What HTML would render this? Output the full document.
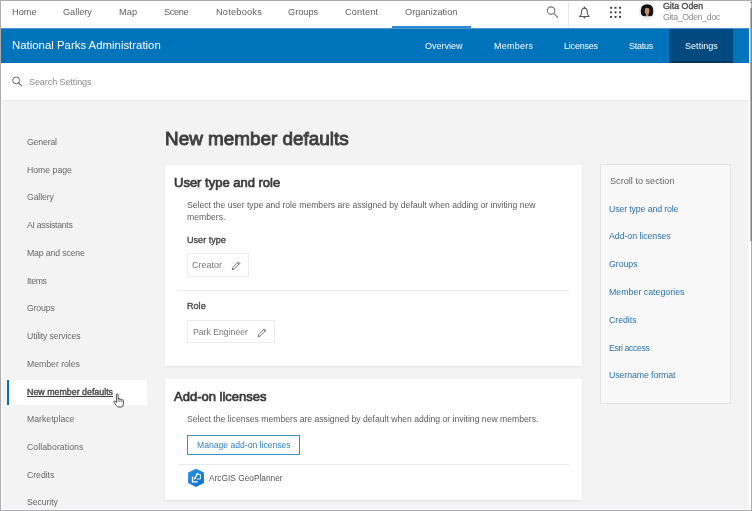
<!DOCTYPE html>
<html><head><meta charset="utf-8"><style>
html,body{margin:0;padding:0;width:752px;height:511px;overflow:hidden;background:#f3f3f3}
body{position:relative;font-family:"Liberation Sans",sans-serif}
.t{position:absolute;white-space:nowrap;line-height:1;will-change:transform}
.r{position:absolute}
</style></head><body>
<div class="r" style="left:0px;top:0px;width:752px;height:28px;background:#fff"></div>
<div class="r" style="left:0px;top:63px;width:752px;height:37px;background:#fff"></div>
<div class="r" style="left:1px;top:28px;width:748px;height:35px;background:#0074ba"></div>
<div class="r" style="left:669px;top:28px;width:64px;height:35px;background:#004a7f"></div>
<div class="r" style="left:669px;top:61px;width:64px;height:2px;background:#00325a"></div>
<div class="t" style="left:11.7px;top:8px;font-size:9.2px;color:#606060;letter-spacing:0.045px;">Home</div>
<div class="t" style="left:63.3px;top:8px;font-size:9.2px;color:#606060;letter-spacing:-0.027px;">Gallery</div>
<div class="t" style="left:118.9px;top:8px;font-size:9.2px;color:#606060;letter-spacing:0.180px;">Map</div>
<div class="t" style="left:164.0px;top:8px;font-size:9.2px;color:#606060;letter-spacing:-0.332px;">Scene</div>
<div class="t" style="left:215.6px;top:8px;font-size:9.2px;color:#606060;letter-spacing:0.228px;">Notebooks</div>
<div class="t" style="left:288.2px;top:8px;font-size:9.2px;color:#606060;letter-spacing:0.005px;">Groups</div>
<div class="t" style="left:345.2px;top:8px;font-size:9.2px;color:#606060;letter-spacing:0.150px;">Content</div>
<div class="t" style="left:405.1px;top:8px;font-size:9.2px;color:#606060;letter-spacing:0.031px;">Organization</div>
<div class="r" style="left:392px;top:26px;width:79px;height:2px;background:#2d8ad0"></div>
<div class="r" style="left:1px;top:28px;width:748px;height:1px;background:#4a95cf"></div>
<div class="r" style="left:568px;top:2px;width:1px;height:25px;background:#e6e6e6"></div>
<div class="t" style="left:12.4px;top:40px;font-size:11.4px;color:#fff;">National Parks Administration</div>
<div class="t" style="left:424.8px;top:42px;font-size:9.0px;color:#fff;letter-spacing:0.011px;">Overview</div>
<div class="t" style="left:493.6px;top:42px;font-size:9.0px;color:#fff;letter-spacing:0.228px;">Members</div>
<div class="t" style="left:563.9px;top:42px;font-size:9.0px;color:#fff;letter-spacing:-0.207px;">Licenses</div>
<div class="t" style="left:629.4px;top:42px;font-size:9.0px;color:#fff;letter-spacing:-0.234px;">Status</div>
<div class="t" style="left:685.1px;top:42px;font-size:9.0px;color:#fff;letter-spacing:0.044px;">Settings</div>
<div class="t" style="left:662.9px;top:2px;font-size:8.8px;color:#505050;-webkit-text-stroke:0.4px #505050;">Gita Oden</div>
<div class="t" style="left:663px;top:13px;font-size:8.7px;color:#8a8a8a;letter-spacing:-0.3px">Gita_Oden_doc</div>
<div class="t" style="left:28.6px;top:78px;font-size:9.0px;color:#8a8a8a;letter-spacing:-0.074px;">Search Settings</div>
<div class="r" style="left:7px;top:380px;width:140px;height:25px;background:#fff"></div>
<div class="r" style="left:7px;top:380px;width:2px;height:25px;background:#0074ba"></div>
<div class="t" style="left:27.0px;top:138px;font-size:8.7px;color:#676767;letter-spacing:-0.145px;">General</div>
<div class="t" style="left:27.0px;top:166px;font-size:8.7px;color:#676767;letter-spacing:0.003px;">Home page</div>
<div class="t" style="left:27.0px;top:193px;font-size:8.7px;color:#676767;letter-spacing:-0.130px;">Gallery</div>
<div class="t" style="left:27.0px;top:221px;font-size:8.7px;color:#676767;letter-spacing:-0.294px;">AI assistants</div>
<div class="t" style="left:27.0px;top:249px;font-size:8.7px;color:#676767;letter-spacing:-0.126px;">Map and scene</div>
<div class="t" style="left:27.0px;top:277px;font-size:8.7px;color:#676767;letter-spacing:-0.332px;">Items</div>
<div class="t" style="left:27.0px;top:304px;font-size:8.7px;color:#676767;letter-spacing:-0.147px;">Groups</div>
<div class="t" style="left:27.0px;top:332px;font-size:8.7px;color:#676767;letter-spacing:-0.133px;">Utility services</div>
<div class="t" style="left:27.0px;top:360px;font-size:8.7px;color:#676767;letter-spacing:-0.014px;">Member roles</div>
<div class="t" style="left:26.6px;top:388px;font-size:8.86px;color:#444;-webkit-text-stroke:0.35px #444;text-decoration:underline;text-underline-offset:0.5px">New member defaults</div>
<div class="t" style="left:27.0px;top:415px;font-size:8.7px;color:#676767;letter-spacing:0.009px;">Marketplace</div>
<div class="t" style="left:27.0px;top:443px;font-size:8.7px;color:#676767;letter-spacing:0.062px;">Collaborations</div>
<div class="t" style="left:27.0px;top:471px;font-size:8.7px;color:#676767;letter-spacing:-0.030px;">Credits</div>
<div class="t" style="left:27.0px;top:498px;font-size:8.7px;color:#676767;letter-spacing:-0.072px;">Security</div>
<div class="t" style="left:165.4px;top:130px;font-size:18.9px;color:#3f3f3f;-webkit-text-stroke:0.9px #3f3f3f;">New member defaults</div>
<div class="r" style="left:165px;top:165px;width:417px;height:201px;background:#fff;box-shadow:0 1px 2px rgba(0,0,0,0.08)"></div>
<div class="t" style="left:174.1px;top:176px;font-size:13px;color:#3b3b3b;-webkit-text-stroke:0.7px #3b3b3b;">User type and role</div>
<div class="t" style="left:187.1px;top:201px;font-size:8.64px;color:#5c5c5c;">Select the user type and role members are assigned by default when adding or inviting new</div>
<div class="t" style="left:187.1px;top:213px;font-size:8.64px;color:#5c5c5c;">members.</div>
<div class="t" style="left:187px;top:236px;font-size:9.1px;color:#474747;-webkit-text-stroke:0.35px #474747;">User type</div>
<div class="r" style="left:187px;top:253px;width:62px;height:24px;border:1px solid #ececec;box-sizing:border-box"></div>
<div class="t" style="left:192.1px;top:261px;font-size:8.98px;color:#777;">Creator</div>
<div class="r" style="left:178px;top:290px;width:391px;height:1px;background:#ebebeb"></div>
<div class="t" style="left:187px;top:302px;font-size:9.1px;color:#474747;-webkit-text-stroke:0.35px #474747;">Role</div>
<div class="r" style="left:187px;top:320px;width:88px;height:23px;border:1px solid #ececec;box-sizing:border-box"></div>
<div class="t" style="left:192.7px;top:328px;font-size:8.69px;color:#777;">Park Engineer</div>
<svg class="r" style="left:230px;top:259px" width="12" height="12" viewBox="0 0 12 12"><path d="M2.2 10.6 L2.8 8.5 L8.4 2.9 L9.9 4.4 L4.3 10 Z M7.6 3.7 L9.1 5.2" fill="none" stroke="#555" stroke-width="0.8" stroke-linejoin="round"/><path d="M2.2 10.6 L2.5 9.4 L3.4 10.3Z" fill="#555"/></svg>
<svg class="r" style="left:256px;top:325.5px" width="12" height="12" viewBox="0 0 12 12"><path d="M2.2 10.6 L2.8 8.5 L8.4 2.9 L9.9 4.4 L4.3 10 Z M7.6 3.7 L9.1 5.2" fill="none" stroke="#555" stroke-width="0.8" stroke-linejoin="round"/><path d="M2.2 10.6 L2.5 9.4 L3.4 10.3Z" fill="#555"/></svg>
<div class="r" style="left:165px;top:379px;width:417px;height:121px;background:#fff;box-shadow:0 1px 2px rgba(0,0,0,0.08)"></div>
<div class="t" style="left:173.8px;top:390px;font-size:13px;color:#3b3b3b;-webkit-text-stroke:0.7px #3b3b3b;">Add-on licenses</div>
<div class="t" style="left:187.1px;top:415px;font-size:8.64px;color:#5c5c5c;">Select the licenses members are assigned by default when adding or inviting new members.</div>
<div class="r" style="left:187px;top:435px;width:113px;height:20px;border:1px solid #3a8dcb;box-sizing:border-box"></div>
<div class="t" style="left:196.6px;top:441px;font-size:8.6px;color:#2f7fbf;">Manage add-on licenses</div>
<div class="r" style="left:178px;top:464px;width:391px;height:1px;background:#ebebeb"></div>
<div class="t" style="left:209.2px;top:474px;font-size:8.34px;color:#555;">ArcGIS GeoPlanner</div>
<svg class="r" style="left:186px;top:466px" width="20" height="24" viewBox="186 466 20 24"><defs><linearGradient id="gp" x1="0" y1="0" x2="1" y2="1"><stop offset="0" stop-color="#2a95e8"/><stop offset="1" stop-color="#0b6cc4"/></linearGradient></defs><path d="M196 468.8 L203.9 472.6 V483.1 L196 486.9 L188.1 483.1 V472.6Z" fill="url(#gp)"/><path d="M192.5 476.6 V481.9 H197.7" fill="none" stroke="#fff" stroke-width="1.3"/><path d="M197.6 474.3 H200.4 V479 H196.8" fill="none" stroke="#fff" stroke-width="0.9"/><path d="M194.6 478.7 L197.6 473.3" stroke="#fff" stroke-width="1.5" stroke-linecap="round"/><path d="M194.2 479.6 L194.9 478.2 L195.8 478.8Z" fill="#fff"/></svg>
<div class="r" style="left:600px;top:164px;width:131px;height:240px;background:#f8f8f8;border:1px solid #e2e2e2;box-sizing:border-box"></div>
<div class="t" style="left:610.4px;top:177px;font-size:9.1px;color:#666;letter-spacing:0.016px;">Scroll to section</div>
<div class="t" style="left:609.3px;top:205px;font-size:8.8px;color:#2b72aa;letter-spacing:-0.141px;">User type and role</div>
<div class="t" style="left:609.3px;top:232px;font-size:8.8px;color:#2b72aa;letter-spacing:-0.062px;">Add-on licenses</div>
<div class="t" style="left:609.3px;top:260px;font-size:8.8px;color:#2b72aa;letter-spacing:-0.053px;">Groups</div>
<div class="t" style="left:609.3px;top:288px;font-size:8.8px;color:#2b72aa;letter-spacing:0.011px;">Member categories</div>
<div class="t" style="left:609.3px;top:316px;font-size:8.8px;color:#2b72aa;letter-spacing:-0.049px;">Credits</div>
<div class="t" style="left:609.3px;top:344px;font-size:8.8px;color:#2b72aa;letter-spacing:-0.407px;">Esri access</div>
<div class="t" style="left:609.3px;top:371px;font-size:8.8px;color:#2b72aa;letter-spacing:-0.109px;">Username format</div>
<svg class="r" style="left:540px;top:0px" width="30" height="28" viewBox="540 0 30 28"><circle cx="551.05" cy="10.6" r="3.75" fill="none" stroke="#707070" stroke-width="1.05"/><line x1="553.8" y1="13.4" x2="557.7" y2="17.4" stroke="#707070" stroke-width="1.1" stroke-linecap="round"/></svg>
<svg class="r" style="left:570px;top:0px" width="30" height="28" viewBox="570 0 30 28"><path d="M579.6 16.4 Q581.6 15.2 581.6 12.6 V11.2 Q581.6 8.3 584.4 8.3 Q587.2 8.3 587.2 11.2 V12.6 Q587.2 15.2 589.2 16.4 Z" fill="none" stroke="#555" stroke-width="1.05" stroke-linejoin="round"/><path d="M583.3 8.6 Q583.6 6.4 584.4 6.2 Q585.2 6.4 585.5 8.6Z" fill="#555"/><path d="M583.3 16.9 H585.5 Q585.2 18.6 584.4 18.7 Q583.6 18.6 583.3 16.9Z" fill="#666"/></svg>
<svg class="r" style="left:604px;top:0px" width="24" height="28" viewBox="604 0 24 28"><rect x="610.15" y="6.85" width="1.9" height="1.9" fill="#3a3a3a"/><rect x="610.15" y="11.35" width="1.9" height="1.9" fill="#3a3a3a"/><rect x="610.15" y="15.95" width="1.9" height="1.9" fill="#3a3a3a"/><rect x="614.60" y="6.85" width="1.9" height="1.9" fill="#3a3a3a"/><rect x="614.60" y="11.35" width="1.9" height="1.9" fill="#3a3a3a"/><rect x="614.60" y="15.95" width="1.9" height="1.9" fill="#3a3a3a"/><rect x="619.08" y="6.85" width="1.9" height="1.9" fill="#3a3a3a"/><rect x="619.08" y="11.35" width="1.9" height="1.9" fill="#3a3a3a"/><rect x="619.08" y="15.95" width="1.9" height="1.9" fill="#3a3a3a"/></svg>
<svg class="r" style="left:634px;top:0px" width="26" height="26" viewBox="634 0 26 26"><defs><clipPath id="av"><circle cx="647.2" cy="12" r="7.7"/></clipPath></defs><circle cx="647.2" cy="12" r="8.5" fill="#ededf1"/><circle cx="647.2" cy="12" r="7.7" fill="#f6f6f8"/><g clip-path="url(#av)"><path d="M641 9.5 Q641.2 4.6 646 3.9 Q651.8 3.6 653 8.6 Q653.6 12.2 652.6 15 Q651.4 16.8 649.4 16.2 L645 16.2 Q642.4 16.8 641.3 14.6 Q640.4 12.2 641 9.5Z" fill="#121212"/><ellipse cx="647.1" cy="11" rx="2.3" ry="3.3" fill="#c38d6e"/><path d="M645.9 13.4 H648.4 V16.6 H645.9Z" fill="#b98266"/><path d="M642.5 18 Q644.5 16.2 647.2 16.4 Q650 16.2 652 18 V22 H642.5Z" fill="#f0f0f0"/></g></svg>
<svg class="r" style="left:8px;top:72px" width="20" height="20" viewBox="8 72 20 20"><circle cx="16.15" cy="80.4" r="3.45" fill="none" stroke="#666" stroke-width="1.0"/><line x1="18.6" y1="82.9" x2="21.5" y2="85.8" stroke="#666" stroke-width="1.1" stroke-linecap="round"/></svg>
<svg class="r" style="left:112.4px;top:392.7px" width="14.08" height="15.84" viewBox="0 0 16 18"><path d="M5 2.2 Q5 1 6 1 Q7 1 7 2.2 V7 Q7.2 6 8.2 6.2 Q9 6.4 9 7.4 Q9.4 6.6 10.3 6.9 Q11 7.2 11 8 Q11.6 7.4 12.3 7.8 Q13 8.2 13 9 V12.5 Q13 15.6 10.2 16 H8 Q6 16 4.8 14.2 L2.3 10.4 Q1.8 9.5 2.6 9.1 Q3.4 8.8 4 9.6 L5 10.8Z" fill="#fff" stroke="#222" stroke-width="0.9" stroke-linejoin="round"/><path d="M7 7 V10.5 M9 7.4 V10.5 M11 8 V10.5" stroke="#222" stroke-width="0.6"/></svg>
<div class="r" style="left:0px;top:100px;width:752px;height:1px;background:#ebebeb"></div>
<div class="r" style="left:1px;top:100px;width:1px;height:410px;background:#fff"></div>
<div class="r" style="left:1px;top:509px;width:750px;height:1px;background:#fff"></div>
<div class="r" style="left:749px;top:1px;width:2px;height:509px;background:#fff"></div>
<div class="r" style="left:748px;top:100px;width:1px;height:409px;background:#f8f8f8"></div>
<div class="r" style="left:0px;top:0px;width:752px;height:1px;background:#a9abae"></div>
<div class="r" style="left:0px;top:0px;width:1px;height:511px;background:#a9abae"></div>
<div class="r" style="left:0px;top:510px;width:752px;height:1px;background:#a9abae"></div>
<div class="r" style="left:751px;top:0px;width:1px;height:511px;background:#aaabae"></div>
<div class="r" style="left:750px;top:2px;width:2px;height:1px;background:#8a8a8a"></div>
<div class="r" style="left:750px;top:8px;width:1px;height:233px;background:#b0b0b0"></div>
<div class="r" style="left:751px;top:8px;width:1px;height:233px;background:#858585"></div>
</body></html>
